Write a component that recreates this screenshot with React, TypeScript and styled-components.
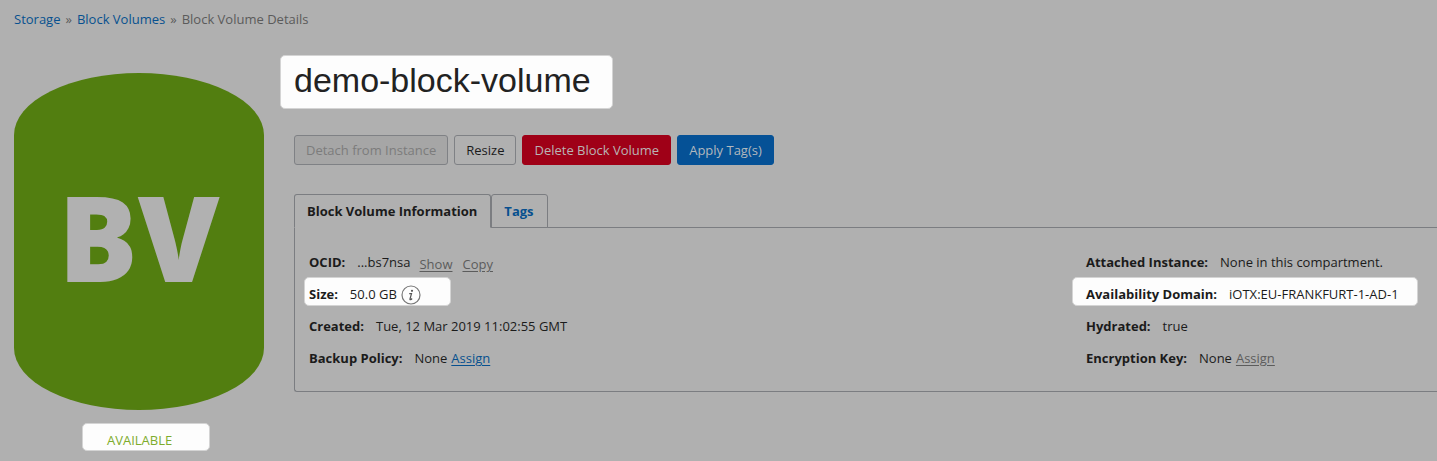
import React from "react";
import styled, { createGlobalStyle, css } from "styled-components";

const GlobalStyle = createGlobalStyle`
  *, *::before, *::after { box-sizing: border-box; }
  html { background: #b0b0b0; }
  body {
    margin: 0;
    background: #b0b0b0;
    color: #1b1b1b;
    font-family: "Open Sans", "Noto Sans", sans-serif;
    font-size: 13px;
    line-height: 20px;
    overflow-x: hidden;
  }
`;

const spotlight = css`
  background: #fdfdfd;
  border: 1px solid #d4d4d4;
  border-radius: 5px;
`;

const Page = styled.div`
  padding: 9px 0 9px 14px;
`;

const Breadcrumbs = styled.nav`
  display: flex;
  gap: 5px;
  color: #5b5b5b;
`;

const CrumbLink = styled.a`
  color: #07508f;
  text-decoration: none;
`;

const Layout = styled.div`
  display: grid;
  grid-template-columns: 250px minmax(0, 1fr);
  column-gap: 30px;
  margin-top: 26px;
`;

const Summary = styled.aside`
  display: flex;
  flex-direction: column;
  align-items: center;
  padding-top: 18px;
`;

const VolumeBadge = styled.div`
  display: flex;
  align-items: center;
  justify-content: center;
  width: 100%;
  height: 337px;
  padding-bottom: 10px;
  border-radius: 125px / 62px;
  background: #527e10;
  color: #b1b1b1;
  font-size: 118px;
  line-height: 118px;
  font-weight: 800;
`;

const Status = styled.div`
  ${spotlight}
  width: 128px;
  height: 28px;
  margin: 13px 0 0 14px;
  padding: 6px 24px 0;
  color: #7dac2c;
  white-space: nowrap;
`;

const Title = styled.h1`
  ${spotlight}
  width: fit-content;
  height: 54px;
  margin: 0 0 0 -14px;
  padding: 0 21px 0 13px;
  color: #222;
  font-family: "Liberation Sans", Arial, sans-serif;
  font-size: 34px;
  line-height: 48px;
  font-weight: 400;
`;

const Actions = styled.div`
  display: flex;
  gap: 6px;
  margin-top: 26px;
`;

type Tone = "plain" | "danger" | "primary";

const tones: Record<Tone, ReturnType<typeof css>> = {
  plain: css`background: #b0b0b0; border-color: #7f8185; color: #1b1b1b;`,
  danger: css`background: #9f0017; border-color: #9f0017; color: #b9b4b5;`,
  primary: css`background: #055196; border-color: #055196; color: #b2b8bd;`,
};

const ActionButton = styled.button<{ $tone?: Tone }>`
  height: 30px;
  padding: 0 11px;
  border: 1px solid;
  border-radius: 3px;
  font: inherit;
  white-space: nowrap;
  ${({ $tone = "plain" }) => tones[$tone]}
  &:disabled { background: #a6a6a6; color: #7c7c7c; }
`;

const Tabs = styled.div`
  display: flex;
  position: relative;
  margin-top: 29px;
`;

const Tab = styled.button<{ $active?: boolean }>`
  height: 34px;
  padding: 0 13px 0 12px;
  border: 1px solid #7b7d81;
  border-bottom-color: ${({ $active }) => ($active ? "#b0b0b0" : "#7b7d81")};
  border-radius: 3px 3px 0 0;
  background: #b0b0b0;
  color: ${({ $active }) => ($active ? "#1b1b1b" : "#07508f")};
  font: inherit;
  font-weight: 700;
  white-space: nowrap;
`;

const Panel = styled.section`
  display: grid;
  grid-template-columns: minmax(0, 1fr) 351px;
  margin-top: -1px;
  padding: 18px 0 17px 14px;
  border: 1px solid #7b7d81;
  border-right: 0;
  border-radius: 0 0 0 3px;
`;

const Details = styled.dl`
  display: flex;
  flex-direction: column;
  align-items: flex-start;
  margin: 0;
`;

const Detail = styled.div<{ $spotInset?: number; $spotEnd?: number }>`
  display: flex;
  align-items: center;
  gap: 12px;
  height: 32px;
  white-space: nowrap;
  ${({ $spotInset, $spotEnd }) =>
    $spotInset &&
    css`
      ${spotlight}
      height: 29px;
      margin: -1px 0 4px -${$spotInset}px;
      padding: 5px ${$spotEnd}px 0 ${$spotInset - 1}px;
    `}
`;

const Term = styled.dt`
  font-weight: 700;
`;

const Value = styled.dd`
  display: flex;
  align-items: center;
  gap: 4px;
  margin: 0;
`;

const TextLink = styled.a<{ $muted?: boolean }>`
  color: ${({ $muted }) => ($muted ? "#5c5c5c" : "#07508f")};
  text-decoration: underline;
  text-underline-offset: 2px;
`;

const OcidLinks = styled.span`
  display: flex;
  gap: 10px;
  padding: 4px 0 0 5px;
`;

const InfoButton = styled.button`
  display: flex;
  padding: 2px 0 0;
  border: 0;
  background: none;
`;

const InfoIcon = () => (
  <svg width="20" height="20" viewBox="0 0 20 20" fill="none" aria-hidden="true">
    <circle cx="10" cy="10" r="9" stroke="#777" strokeWidth="1.2" />
    <circle cx="11" cy="5.8" r="1.1" fill="#555" />
    <path d="M8.2 8.6h2.3L9 14q-.2.9.5.7.7-.2 1.6-1.2" stroke="#555" strokeWidth="1.2" />
  </svg>
);

export default function App() {
  return (
    <Page>
      <GlobalStyle />
      <Breadcrumbs aria-label="Breadcrumb">
        <CrumbLink href="#storage">Storage</CrumbLink>
        <span>»</span>
        <CrumbLink href="#volumes">Block Volumes</CrumbLink>
        <span>»</span>
        <span>Block Volume Details</span>
      </Breadcrumbs>
      <Layout>
        <Summary>
          <VolumeBadge>BV</VolumeBadge>
          <Status>AVAILABLE</Status>
        </Summary>
        <main>
          <Title>demo-block-volume</Title>
          <Actions>
            <ActionButton disabled>Detach from Instance</ActionButton>
            <ActionButton>Resize</ActionButton>
            <ActionButton $tone="danger">Delete Block Volume</ActionButton>
            <ActionButton $tone="primary">Apply Tag(s)</ActionButton>
          </Actions>
          <Tabs role="tablist">
            <Tab role="tab" aria-selected="true" $active>Block Volume Information</Tab>
            <Tab role="tab" aria-selected="false">Tags</Tab>
          </Tabs>
          <Panel role="tabpanel">
            <Details>
              <Detail>
                <Term>OCID:</Term>
                <Value>
                  ...bs7nsa
                  <OcidLinks>
                    <TextLink href="#show" $muted>Show</TextLink>
                    <TextLink href="#copy" $muted>Copy</TextLink>
                  </OcidLinks>
                </Value>
              </Detail>
              <Detail $spotInset={5} $spotEnd={29}>
                <Term>Size:</Term>
                <Value>
                  50.0 GB
                  <InfoButton aria-label="Size information"><InfoIcon /></InfoButton>
                </Value>
              </Detail>
              <Detail>
                <Term>Created:</Term>
                <Value>Tue, 12 Mar 2019 11:02:55 GMT</Value>
              </Detail>
              <Detail>
                <Term>Backup Policy:</Term>
                <Value>None <TextLink href="#policy">Assign</TextLink></Value>
              </Detail>
            </Details>
            <Details>
              <Detail>
                <Term>Attached Instance:</Term>
                <Value>None in this compartment.</Value>
              </Detail>
              <Detail $spotInset={14} $spotEnd={18}>
                <Term>Availability Domain:</Term>
                <Value>iOTX:EU-FRANKFURT-1-AD-1</Value>
              </Detail>
              <Detail>
                <Term>Hydrated:</Term>
                <Value>true</Value>
              </Detail>
              <Detail>
                <Term>Encryption Key:</Term>
                <Value>None <TextLink href="#key" $muted>Assign</TextLink></Value>
              </Detail>
            </Details>
          </Panel>
        </main>
      </Layout>
    </Page>
  );
}
